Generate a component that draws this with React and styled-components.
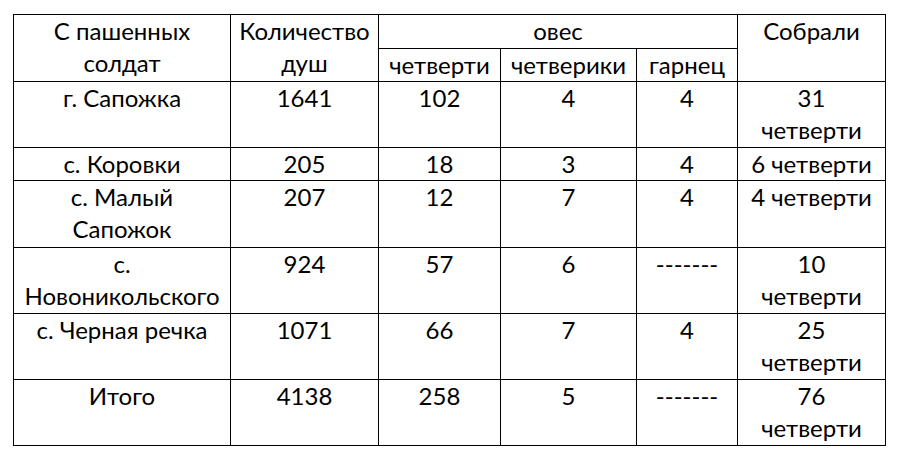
import React from "react";
import styled, { createGlobalStyle } from "styled-components";

const Global = createGlobalStyle`
  html, body { margin: 0; padding: 0; background: #fff; }
  body { font-family: Lato, "Open Sans", sans-serif; color: #000; }
`;

const Page = styled.div`
  width: 902px;
  height: 462px;
  padding: 14px 0 0 13px;
  box-sizing: border-box;
  background: #fff;
`;

const Table = styled.table`
  border-collapse: collapse;
  table-layout: fixed;
  width: 872px;
  font-size: 24px;
  line-height: 32px;
`;

const Cell = styled.td`
  border: 1px solid #000;
  padding: 0 4px;
  text-align: center;
  vertical-align: top;
  white-space: nowrap;
  overflow: visible;
  height: ${(p) => p.$h}px;
  box-sizing: border-box;
`;

const HeadCell = styled(Cell).attrs({ as: "th" })`
  font-weight: normal;
`;

const widths = [217, 148, 122, 136, 101, 148];

const rows = [
  { h: 66, c: [["г. Сапожка"], ["1641"], ["102"], ["4"], ["4"], ["31", "четверти"]] },
  { h: 32, c: [["с. Коровки"], ["205"], ["18"], ["3"], ["4"], ["6 четверти"]] },
  { h: 67, c: [["с. Малый", "Сапожок"], ["207"], ["12"], ["7"], ["4"], ["4 четверти"]] },
  { h: 66, c: [["с.", "Новоникольского"], ["924"], ["57"], ["6"], ["-------"], ["10", "четверти"]] },
  { h: 66, c: [["с. Черная речка"], ["1071"], ["66"], ["7"], ["4"], ["25", "четверти"]] },
  { h: 66, c: [["Итого"], ["4138"], ["258"], ["5"], ["-------"], ["76", "четверти"]] },
];

const Lines = ({ lines }) =>
  lines.map((l, i) => (
    <React.Fragment key={i}>
      {i > 0 && <br />}
      {l}
    </React.Fragment>
  ));

export default function App() {
  return (
    <>
      <Global />
      <Page>
        <Table>
          <colgroup>
            {widths.map((w, i) => (
              <col key={i} style={{ width: w }} />
            ))}
          </colgroup>
          <thead>
            <tr>
              <HeadCell rowSpan={2} $h={34}>
                <Lines lines={["С пашенных", "солдат"]} />
              </HeadCell>
              <HeadCell rowSpan={2} $h={34}>
                <Lines lines={["Количество", "душ"]} />
              </HeadCell>
              <HeadCell colSpan={3} $h={34}>овес</HeadCell>
              <HeadCell rowSpan={2} $h={34}>Собрали</HeadCell>
            </tr>
            <tr>
              <HeadCell $h={33}>четверти</HeadCell>
              <HeadCell $h={33}>четверики</HeadCell>
              <HeadCell $h={33}>гарнец</HeadCell>
            </tr>
          </thead>
          <tbody>
            {rows.map((r, i) => (
              <tr key={i}>
                {r.c.map((lines, j) => (
                  <Cell key={j} $h={r.h}>
                    <Lines lines={lines} />
                  </Cell>
                ))}
              </tr>
            ))}
          </tbody>
        </Table>
      </Page>
    </>
  );
}
